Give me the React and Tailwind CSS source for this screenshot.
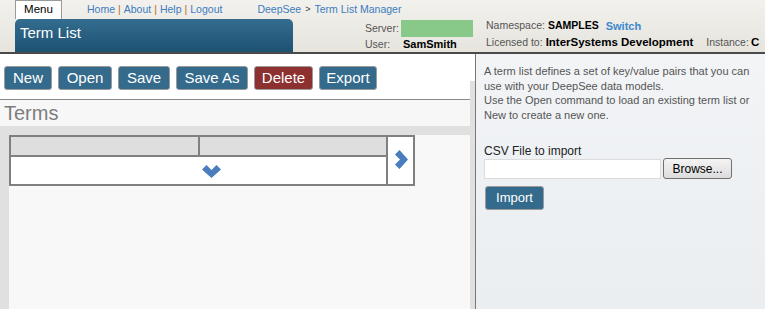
const FONT = { fontFamily: '"Liberation Sans", Arial, sans-serif' };

const BUTTONS = [
  { label: 'New', w: 'w-[48px]' },
  { label: 'Open', w: 'w-[54px]' },
  { label: 'Save', w: 'w-[52px]' },
  { label: 'Save As', w: 'w-[72px]' },
  { label: 'Delete', w: 'w-[59px]', danger: true },
  { label: 'Export', w: 'w-[58px]' },
];

function ChevronDown() {
  return (
    <svg width="19" height="13" viewBox="0 0 19 13">
      <polygon points="0,4.5 4.5,0 9.5,5 14.5,0 19,4.5 9.5,13" fill="#4a7dbd" />
    </svg>
  );
}

function ChevronRight() {
  return (
    <svg width="13" height="19" viewBox="0 0 13 19">
      <polygon points="4.5,0 13,9.5 4.5,19 0,14.5 5,9.5 0,4.5" fill="#4a7dbd" />
    </svg>
  );
}

function Header() {
  return (
    <div className="flex h-[54px] border-b-2 border-[#4a4a4a] bg-gradient-to-b from-[#f2f1ed] to-[#e6e4dd]">
      <div className="flex w-[486px] shrink-0 flex-col">
        <div className="flex h-[19px] items-center">
          <div className="ml-[15px] flex h-[19px] w-[47px] items-center justify-center border border-b-0 border-[#9a9a9a] bg-white text-[11.5px] text-black">
            Menu
          </div>
          <div className="ml-[25px] flex items-center gap-[3px] text-[10.5px] text-[#3d7cc0]">
            <span>Home</span>
            <span className="text-[#c0682a]">|</span>
            <span>About</span>
            <span className="text-[#c0682a]">|</span>
            <span>Help</span>
            <span className="text-[#c0682a]">|</span>
            <span>Logout</span>
          </div>
          <div className="ml-[35px] flex items-center gap-[4px] text-[10.5px] text-[#3d7cc0]">
            <span>DeepSee</span>
            <span className="text-[9px] text-[#333]">&gt;</span>
            <span>Term List Manager</span>
          </div>
        </div>
        <div className="flex h-[33px]">
          <div className="ml-[15px] flex w-[278px] items-center rounded-t-[5px] bg-gradient-to-b from-[#346d90] to-[#1d5272] pl-[5px] pb-[4px] text-[15px] text-white">
            Term List
          </div>
          <div className="ml-[72px] flex flex-col pt-[1px] text-[10.5px] text-[#555]">
            <div className="flex h-[17px] items-center">
              <span className="w-[36px]">Server:</span>
              <span className="h-[17px] w-[72px] bg-[#88c98a]" />
            </div>
            <div className="flex h-[15px] items-center">
              <span className="w-[38px]">User:</span>
              <span className="text-[11px] font-bold text-black">SamSmith</span>
            </div>
          </div>
        </div>
      </div>
      <div className="flex flex-col whitespace-nowrap pt-[18px] text-[10.5px] text-[#555]">
        <div className="flex h-[16px] items-center">
          <span>Namespace:</span>
          <span className="ml-[3px] font-bold text-black">SAMPLES</span>
          <span className="ml-[7px] text-[11px] font-bold text-[#3a88cf]">Switch</span>
        </div>
        <div className="flex h-[17px] items-center">
          <span>Licensed to:</span>
          <span className="ml-[3px] text-[11.5px] font-bold text-black">InterSystems Development</span>
          <span className="ml-[13px]">Instance:</span>
          <span className="ml-[2px] text-[11.5px] font-bold text-black">C</span>
        </div>
      </div>
    </div>
  );
}

function TermTable() {
  return (
    <div className="flex w-[406px] border-2 border-[#808080] bg-white">
      <div className="flex flex-1 flex-col">
        <div className="flex h-[20px] border-b-2 border-[#808080] bg-[#dedede]">
          <div className="w-[189px] border-r-2 border-[#808080]" />
          <div className="flex-1" />
        </div>
        <div className="flex h-[27px] items-center pl-[191px] pt-[1px]">
          <ChevronDown />
        </div>
      </div>
      <div className="flex w-[27px] items-center justify-center border-l-2 border-[#808080] pb-[3px] pl-[1px]">
        <ChevronRight />
      </div>
    </div>
  );
}

export default function App() {
  return (
    <div className="h-[309px] w-[765px] overflow-hidden bg-white" style={FONT}>
      <Header />
      <div className="flex h-[255px]">
        <div className="flex w-[470px] shrink-0 flex-col">
          <div className="flex h-[46px] gap-[6px] border-b border-[#8a8a8a] bg-white pl-[4px] pt-[12px]">
            {BUTTONS.map((b) => (
              <button
                key={b.label}
                className={`flex h-[24px] ${b.w} items-center justify-center rounded-[3px] border border-[#9a9a9a] text-[15px] text-white ${
                  b.danger ? 'bg-[#8c3030]' : 'bg-[#346b8d]'
                }`}
              >
                {b.label}
              </button>
            ))}
          </div>
          <div className="flex h-[26px] items-center bg-[#f7f7f7] pl-[4px] text-[20px] text-[#7d7d7d]">
            Terms
          </div>
          <div className="flex-1 border-l-[9px] border-t-[9px] border-[#e0e0e0] bg-[#f8f8f8]">
            <TermTable />
          </div>
        </div>
        <div className="flex w-[5px] shrink-0 flex-col bg-white">
          <div className="mt-[27px] flex-1 bg-[#e0e0e0]" />
        </div>
        <div className="flex-1 border-l border-[#777] bg-gradient-to-b from-[#f2f4f6] to-[#eaeef1] pl-[8px] pt-[10px]">
          <p className="text-[11px] leading-[14.5px] text-[#555]">
            A term list defines a set of key/value pairs that you can
            <br />
            use with your DeepSee data models.
            <br />
            Use the Open command to load an existing term list or
            <br />
            New to create a new one.
          </p>
          <div className="mt-[22px] text-[12px] leading-[14px] text-[#222]">CSV File to import</div>
          <div className="flex items-center gap-[2px]">
            <div className="h-[20px] w-[177px] border border-[#dcdcdc] bg-white" />
            <button className="flex h-[21px] w-[69px] items-center justify-center rounded-[3px] border border-[#707070] bg-gradient-to-b from-[#f4f4f4] to-[#dcdcdc] text-[12px] text-black">
              Browse...
            </button>
          </div>
          <button className="ml-[1px] mt-[7px] flex h-[24px] w-[59px] items-center justify-center rounded-[3px] border border-[#9a9a9a] bg-[#346b8d] text-[13px] text-white">
            Import
          </button>
        </div>
      </div>
    </div>
  );
}
